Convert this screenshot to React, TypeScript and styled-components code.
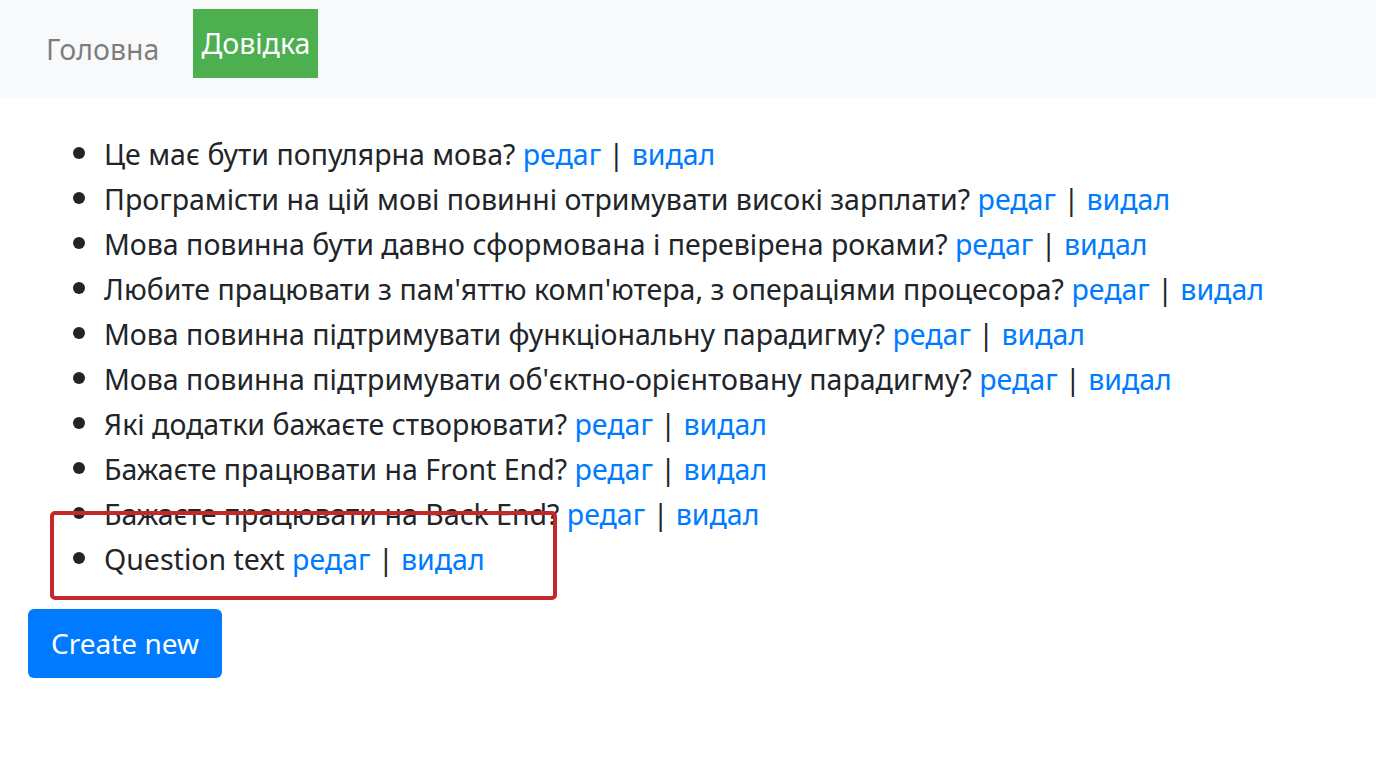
import React from "react";
import styled, { createGlobalStyle } from "styled-components";

const Global = createGlobalStyle`
  html, body { margin: 0; padding: 0; background: #fff; }
  body { font-family: "Noto Sans", "Open Sans", sans-serif; color: #212529; }
`;

const Page = styled.div`
  position: relative;
  width: 1376px;
  min-height: 762px;
`;

const Navbar = styled.nav`
  height: 98px;
  background: #f8f9fa;
  display: flex;
  align-items: flex-start;
  padding: 0 0 0 46px;
  box-sizing: border-box;
  gap: 34px;
`;

const NavLink = styled.a<{ $active?: boolean }>`
  font-size: 28.5px;
  line-height: 1;
  text-decoration: none;
  color: ${(p) => (p.$active ? "#fff" : "rgba(0,0,0,0.5)")};
  background: ${(p) => (p.$active ? "#4caf50" : "transparent")};
  height: 69px;
  width: ${(p) => (p.$active ? "125px" : "auto")};
  margin-top: ${(p) => (p.$active ? "9px" : "15px")};
  display: flex;
  align-items: center;
  justify-content: center;
  box-sizing: border-box;
`;

const Main = styled.main`
  padding: 32px 28px 0;
`;

const List = styled.ul`
  margin: 0 0 29px;
  padding: 0 0 0 76px;
  font-size: 28.5px;
  line-height: 45px;
`;

const Item = styled.li`
  height: 45px;
  &::marker { font-size: 34px; }
`;

const Link = styled.a`
  color: #007bff;
  text-decoration: none;
`;

const Button = styled.button`
  font-family: inherit;
  font-size: 28px;
  color: #fff;
  background: #007bff;
  border: none;
  border-radius: 6px;
  width: 194px;
  height: 69px;
  padding: 0 0 2px;
`;

const Highlight = styled.div`
  position: absolute;
  left: 50px;
  top: 511px;
  width: 507px;
  height: 89px;
  border: 4px solid #c62828;
  border-radius: 5px;
  box-sizing: border-box;
  pointer-events: none;
`;

const questions = [
  "Це має бути популярна мова?",
  "Програмісти на цій мові повинні отримувати високі зарплати?",
  "Мова повинна бути давно сформована і перевірена роками?",
  "Любите працювати з пам'яттю комп'ютера, з операціями процесора?",
  "Мова повинна підтримувати функціональну парадигму?",
  "Мова повинна підтримувати об'єктно-орієнтовану парадигму?",
  "Які додатки бажаєте створювати?",
  "Бажаєте працювати на Front End?",
  "Бажаєте працювати на Back End?",
  "Question text",
];

export default function App() {
  return (
    <Page>
      <Global />
      <Navbar>
        <NavLink href="#">Головна</NavLink>
        <NavLink href="#" $active>Довідка</NavLink>
      </Navbar>
      <Main>
        <List>
          {questions.map((q) => (
            <Item key={q}>
              {q} <Link href="#">редаг</Link> | <Link href="#">видал</Link>
            </Item>
          ))}
        </List>
        <Button>Create new</Button>
      </Main>
      <Highlight />
    </Page>
  );
}
